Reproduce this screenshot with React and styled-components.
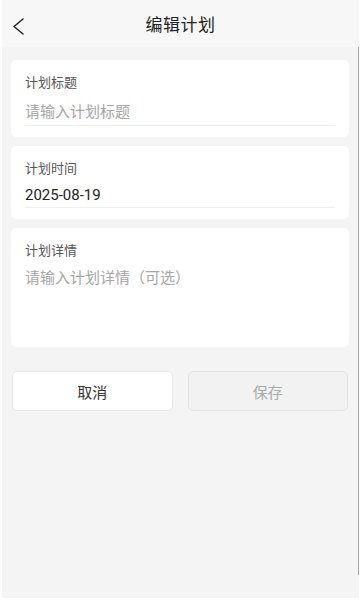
import styled, { createGlobalStyle } from 'styled-components';
import { useState } from 'react';

const GlobalStyle = createGlobalStyle`
  * { box-sizing: border-box; }
  body {
    margin: 0;
    background: #fff;
    font-family: "Noto Sans CJK SC", "Noto Sans", sans-serif;
  }
`;

//layout
const Screen = styled.div`
  width: 360px;
  height: 600px;
  padding: 0 1px 2px 2px;
  display: flex;
  flex-direction: column;
`;

const Header = styled.header`
  height: 47px;
  flex-shrink: 0;
  background: #f7f7f7;
  display: flex;
  align-items: center;
  justify-content: center;
  position: relative;
`;

const BackBtn = styled.button`
  position: absolute;
  left: 9px;
  top: 17px;
  border: 0;
  padding: 0;
  background: none;
  display: flex;
  cursor: pointer;
`;

const Title = styled.h1`
  margin: 0;
  font-size: 17px;
  font-weight: 400;
  color: #222;
  letter-spacing: 0.5px;
`;

const Content = styled.main`
  flex: 1;
  position: relative;
  background: #f4f4f4;
  padding: 13px 10px 0 9px;
  display: flex;
  flex-direction: column;
  gap: 9px;
`;

const ScrollThumb = styled.div`
  position: absolute;
  right: 0;
  top: 0;
  width: 1.5px;
  height: 528px;
  background: #a8a8a8;
`;

const Card = styled.section`
  background: #fff;
  border-radius: 5px;
  padding: 12px 14px 11px;
  display: flex;
  flex-direction: column;
`;

const Label = styled.label`
  font-size: 13px;
  line-height: 20px;
  color: #555;
`;

const TextInput = styled.input`
  height: 34px;
  padding: 3px 0 0;
  border: 0;
  border-bottom: 1px solid #efefef;
  outline: none;
  font-family: inherit;
  font-size: 15px;
  color: #222;
  background: transparent;
  &::placeholder {
    color: #a6a6a6;
  }
`;

const DateValue = styled.div`
  padding: 7px 0 2px;
  line-height: 20px;
  font-size: 15px;
  color: #222;
  border-bottom: 1px solid #efefef;
  font-family: "Roboto", "Noto Sans", sans-serif;
`;

const Detail = styled.textarea`
  height: 76px;
  padding: 7px 0 0;
  border: 0;
  outline: none;
  resize: none;
  font-family: inherit;
  font-size: 15px;
  line-height: 20px;
  color: #222;
  &::placeholder {
    color: #a6a6a6;
  }
`;

const Actions = styled.div`
  margin-top: 15px;
  padding: 0 1px 0 1px;
  display: grid;
  grid-template-columns: 1fr 1fr;
  gap: 15px;
`;

const ActionBtn = styled.button`
  height: 40px;
  border-radius: 5px;
  font-family: inherit;
  font-size: 15px;
  border: 1px solid ${p => (p.disabled ? '#e2e2e2' : '#e6e6e6')};
  background: ${p => (p.disabled ? '#f2f2f2' : '#fff')};
  color: ${p => (p.disabled ? '#aaa' : '#333')};
`;

function ChevronLeft() {
  return (
    <svg width="14" height="18" viewBox="0 0 14 18">
      <polyline
        points="12,2 3,9.5 12,17"
        fill="none"
        stroke="#222"
        strokeWidth="1.5"
        strokeLinecap="round"
        strokeLinejoin="round"
      />
    </svg>
  );
}

export default function App() {
  const [title, setTitle] = useState('');
  const [detail, setDetail] = useState('');

  return (
    <>
      <GlobalStyle />
      <Screen>
        <Header>
          <BackBtn aria-label="返回">
            <ChevronLeft />
          </BackBtn>
          <Title>编辑计划</Title>
        </Header>
        <Content>
          <ScrollThumb />
          <Card>
            <Label>计划标题</Label>
            <TextInput
              placeholder="请输入计划标题"
              value={title}
              onChange={e => setTitle(e.target.value)}
            />
          </Card>
          <Card>
            <Label>计划时间</Label>
            <DateValue>2025-08-19</DateValue>
          </Card>
          <Card>
            <Label>计划详情</Label>
            <Detail
              placeholder="请输入计划详情（可选）"
              value={detail}
              onChange={e => setDetail(e.target.value)}
            />
          </Card>
          <Actions>
            <ActionBtn>取消</ActionBtn>
            <ActionBtn disabled>保存</ActionBtn>
          </Actions>
        </Content>
      </Screen>
    </>
  );
}
